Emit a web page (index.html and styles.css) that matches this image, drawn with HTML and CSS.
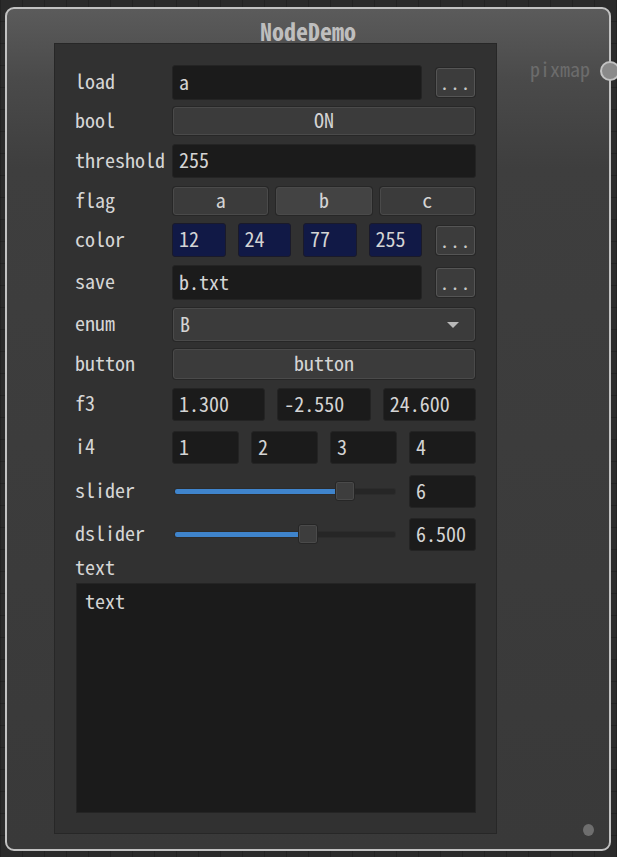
FILE: index.html
```html
<!DOCTYPE html>
<html>
<head>
<meta charset="utf-8">
<link rel="stylesheet" href="styles.css">
</head>
<body>
<div class="canvas">
  <div class="node">
    <div class="title">NodeDemo</div>
    <div class="out-port"><span class="port-name">pixmap</span><span class="port-dot"></span></div>
    <div class="panel">
      <div class="row r-load">
        <div class="label">load</div>
        <div class="ctrl"><div class="input grow">a</div><div class="dots">...</div></div>
      </div>
      <div class="row r-bool">
        <div class="label">bool</div>
        <div class="ctrl"><div class="btn grow">ON</div></div>
      </div>
      <div class="row r-thr">
        <div class="label">threshold</div>
        <div class="ctrl"><div class="input grow">255</div></div>
      </div>
      <div class="row r-flag">
        <div class="label">flag</div>
        <div class="ctrl gap8"><div class="btn grow">a</div><div class="btn grow on">b</div><div class="btn grow">c</div></div>
      </div>
      <div class="row r-color">
        <div class="label">color</div>
        <div class="ctrl">
          <div class="boxes4"><div class="input blue">12</div><div class="input blue">24</div><div class="input blue">77</div><div class="input blue">255</div></div>
          <div class="dots">...</div>
        </div>
      </div>
      <div class="row r-save">
        <div class="label">save</div>
        <div class="ctrl"><div class="input grow">b.txt</div><div class="dots">...</div></div>
      </div>
      <div class="row r-enum">
        <div class="label">enum</div>
        <div class="ctrl"><div class="btn combo grow"><span>B</span><span class="arrow"></span></div></div>
      </div>
      <div class="row r-button">
        <div class="label">button</div>
        <div class="ctrl"><div class="btn grow">button</div></div>
      </div>
      <div class="row r-f3">
        <div class="label">f3</div>
        <div class="ctrl gap12"><div class="input grow">1.300</div><div class="input grow">-2.550</div><div class="input grow">24.600</div></div>
      </div>
      <div class="row r-i4">
        <div class="label">i4</div>
        <div class="ctrl gap12"><div class="input grow">1</div><div class="input grow">2</div><div class="input grow">3</div><div class="input grow">4</div></div>
      </div>
      <div class="row r-slider">
        <div class="label">slider</div>
        <div class="ctrl">
          <div class="slider"><div class="track"><div class="fill" style="width:169px"></div><div class="thumb" style="left:160px"></div></div></div>
          <div class="input val">6</div>
        </div>
      </div>
      <div class="row r-dslider">
        <div class="label">dslider</div>
        <div class="ctrl">
          <div class="slider"><div class="track"><div class="fill" style="width:133px"></div><div class="thumb" style="left:123px"></div></div></div>
          <div class="input val">6.500</div>
        </div>
      </div>
      <div class="text-label">text</div>
      <div class="textarea">text</div>
    </div>
    <div class="corner-dot"></div>
  </div>
</div>
</body>
</html>
```
FILE: styles.css
```css
html, body {
  margin: 0;
  padding: 0;
}
body {
  width: 617px;
  height: 857px;
  overflow: hidden;
  background-color: #2b2b2b;
  background-image:
    linear-gradient(90deg, rgba(0,0,0,0.18) 1px, transparent 1px),
    linear-gradient(0deg, rgba(0,0,0,0.18) 1px, transparent 1px);
  background-size: 22px 22px;
  font-family: "Noto Sans Mono CJK SC", "Liberation Mono", monospace;
  color: #d4d4d4;
}
.canvas {
  padding: 7px 0 0 5px;
}
.node {
  position: relative;
  width: 602px;
  height: 840px;
  border: 2px solid #c2c2c2;
  border-radius: 9px;
  background: linear-gradient(180deg, #5b5b5b 0px, #4a4a4a 70px, #3e3e3e 160px, #393939 100%);
  box-sizing: content-box;
}
.title {
  height: 24px;
  padding-top: 10px;
  line-height: 24px;
  text-align: center;
  font-size: 24px;
  font-weight: 600;
  color: #bebebe;
  padding-left: 0;
}
.out-port {
  position: absolute;
  right: -11px;
  top: 45px;
  display: flex;
  align-items: center;
  gap: 10px;
}
.port-name {
  font-size: 20px;
  color: #6c6c6c;
  padding-bottom: 4px;
}
.port-dot {
  width: 16px;
  height: 16px;
  border-radius: 50%;
  background: #8a8a8a;
  border: 2px solid #c2c2c2;
}
.panel {
  margin-left: 47px;
  width: 401px;
  height: 768px;
  border: 1px solid #272727;
  background: #313131;
  padding: 21px 20px 0 20px;
}
.row {
  display: flex;
  align-items: center;
}
.label {
  width: 97px;
  flex: none;
  font-size: 20px;
  color: #d6d6d6;
  white-space: nowrap;
  padding-bottom: 4px;
}
.ctrl {
  flex: 1;
  display: flex;
  align-items: center;
  gap: 14px;
  height: 100%;
}
.gap8 { gap: 8px; padding: 0 1px; }
.gap12 { gap: 12px; }
.grow { flex: 1; }
.input {
  box-sizing: border-box;
  height: 100%;
  background: #1b1b1b;
  border: 1px solid #242424;
  border-radius: 3px;
  padding-left: 6px;
  padding-bottom: 3px;
  font-size: 20px;
  color: #d4d4d4;
  display: flex;
  align-items: center;
  white-space: nowrap;
  min-width: 0;
}
.btn {
  box-sizing: border-box;
  height: 100%;
  background: #3b3b3b;
  border: 1px solid #4a4a4a;
  box-shadow: 0 0 0 1px #272727;
  border-radius: 3px;
  font-size: 20px;
  color: #d4d4d4;
  display: flex;
  align-items: center;
  justify-content: center;
  padding-bottom: 3px;
}
.btn.on {
  background: #434343;
}
.dots {
  box-sizing: border-box;
  width: 39px;
  height: 29px;
  flex: none;
  margin-right: 1px;
  background: #3c3c3c;
  border: 1px solid #555;
  box-shadow: 0 0 0 1px #272727;
  border-radius: 3px;
  font-size: 19px;
  color: #c8c8c8;
  display: flex;
  align-items: center;
  justify-content: center;
  letter-spacing: 1px;
  padding-bottom: 2px;
}
.boxes4 {
  flex: 1;
  display: flex;
  gap: 12px;
  height: 100%;
}
.blue {
  flex: 1;
  background: #111946;
  border-color: #1a1a2a;
}
.combo {
  justify-content: space-between;
  padding: 0 15px 3px 6px;
}
.arrow {
  width: 0;
  height: 0;
  margin-top: 3px;
  border-left: 6px solid transparent;
  border-right: 6px solid transparent;
  border-top: 6px solid #b8b8b8;
}
.r-load { height: 35px; }
.r-bool { height: 28px; margin-top: 7px; }
.r-bool .ctrl { padding: 0 1px; }
.r-thr { height: 34px; margin-top: 9px; }
.r-flag { height: 28px; margin-top: 9px; }
.r-color { height: 34px; margin-top: 8px; }
.r-save { height: 35px; margin-top: 8px; }
.r-enum { height: 33px; margin-top: 8px; }
.r-enum .ctrl { padding: 0 1px; }
.r-button { height: 30px; margin-top: 8px; }
.r-button .ctrl { padding: 0 1px; }
.r-f3 { height: 33px; margin-top: 9px; }
.r-i4 { height: 33px; margin-top: 10px; }
.r-slider { height: 33px; margin-top: 11px; }
.r-dslider { height: 33px; margin-top: 10px; }
.slider {
  flex: 1;
  padding-left: 3px;
  display: flex;
  align-items: center;
}
.track {
  position: relative;
  width: 220px;
  height: 5px;
  background: #262626;
  border-radius: 2px;
  box-shadow: 0 0 0 1px #2c2c2c;
}
.fill {
  height: 5px;
  background: #3f84cc;
  border-radius: 2px 0 0 2px;
}
.thumb {
  position: absolute;
  top: -8px;
  width: 18px;
  height: 18px;
  background: #3d3d3d;
  border: 1px solid #262626;
  box-shadow: inset 0 0 0 1px #4a4a4a;
  border-radius: 3px;
}
.val {
  width: 67px;
  flex: none;
}
.text-label {
  margin-top: 7px;
  height: 25px;
  line-height: 18px;
  font-size: 20px;
  color: #d6d6d6;
}
.textarea {
  margin-left: 1px;
  height: 230px;
  box-sizing: border-box;
  background: #1b1b1b;
  border: 1px solid #242424;
  padding: 2px 8px;
  font-size: 20px;
  color: #d4d4d4;
}
.corner-dot {
  position: absolute;
  right: 15px;
  bottom: 13px;
  width: 11px;
  height: 12px;
  border-radius: 50%;
  background: #6e6e6e;
}
```
